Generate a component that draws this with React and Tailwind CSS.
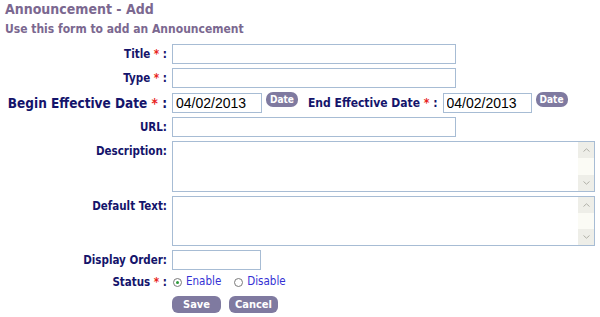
import React from "react";

const font = "font-['DejaVu_Sans_Condensed','DejaVu_Sans',sans-serif]";

function Label({ children, req, big }) {
  return (
    <div
      className={`w-[162px] shrink-0 text-right font-bold text-[#14146b] ${
        big ? "text-[13.5px]" : "text-[11.5px]"
      } leading-[20px] whitespace-nowrap`}
    >
      {children}
      {req && <span className="text-[#e8231d]"> *</span>}
      {req ? " :" : ":"}
    </div>
  );
}

function TextBox({ w, value = "" }) {
  return (
    <input
      type="text"
      defaultValue={value}
      className={`block ${w} h-[20px] border border-[#a7bcd4] bg-white px-[3px] text-[14px] text-black outline-none font-['Liberation_Sans',Arial,sans-serif]`}
    />
  );
}

function SmallBtn({ children }) {
  return (
    <span className="ml-[4px] -mt-[1px] flex h-[15px] items-center rounded-[7px] bg-[#7f7aa0] px-[4px] text-[10px] font-bold leading-none text-white">
      {children}
    </span>
  );
}

function Chevron({ up }) {
  return (
    <svg width="7" height="4" viewBox="0 0 7 4">
      <path
        d={up ? "M0.5 3.5 L3.5 0.8 L6.5 3.5" : "M0.5 0.5 L3.5 3.2 L6.5 0.5"}
        fill="none"
        stroke="#b0b0a8"
        strokeWidth="1"
      />
    </svg>
  );
}

function Area({ h }) {
  return (
    <div className={`ml-[5px] flex w-[426px] ${h} border border-[#a7bcd4] bg-white`}>
      <textarea className="flex-1 resize-none outline-none" />
      <div className="flex w-[16px] flex-col justify-between bg-[#fbfbf5]">
        <div className="flex h-[16px] items-center justify-center bg-[#eeeee8]">
          <Chevron up />
        </div>
        <div className="flex h-[16px] items-center justify-center bg-[#eeeee8]">
          <Chevron />
        </div>
      </div>
    </div>
  );
}

function Radio({ checked, label }) {
  return (
    <span className="flex items-center">
      <span className="flex h-[9px] w-[9px] items-center justify-center rounded-full border border-[#7a7a7a] bg-white">
        {checked && <span className="h-[3px] w-[3px] rounded-full bg-[#2e9a3a]" />}
      </span>
      <span className="ml-[4px] text-[11.5px] text-[#3431d4]">{label}</span>
    </span>
  );
}

export default function App() {
  return (
    <div className={`h-[317px] w-[600px] bg-white ${font} px-[5px] pt-[1px]`}>
      <h1 className="text-[14px] font-bold leading-[17px] text-[#7b6890]">
        Announcement - Add
      </h1>
      <p className="mt-[4px] text-[12px] font-bold leading-[15px] text-[#7b6890]">
        Use this form to add an Announcement
      </p>

      <div className="mt-[7px] flex flex-col">
        {/* Title */}
        <div className="flex items-start">
          <Label req>Title</Label>
          <div className="ml-[5px]">
            <TextBox w="w-[284px]" />
          </div>
        </div>

        {/* Type */}
        <div className="mt-[4px] flex items-start">
          <Label req>Type</Label>
          <div className="ml-[5px]">
            <TextBox w="w-[284px]" />
          </div>
        </div>

        {/* Dates */}
        <div className="mt-[5px] flex items-start">
          <Label req big>
            Begin Effective Date
          </Label>
          <div className="ml-[5px] flex items-start">
            <TextBox w="w-[90px]" value="04/02/2013" />
            <SmallBtn>Date</SmallBtn>
          </div>
          <div className="ml-[10px] text-[12px] font-bold leading-[20px] text-[#14146b] whitespace-nowrap">
            End Effective Date<span className="text-[#e8231d]"> *</span> :
          </div>
          <div className="ml-[5px] flex items-start">
            <TextBox w="w-[89px]" value="04/02/2013" />
            <SmallBtn>Date</SmallBtn>
          </div>
        </div>

        {/* URL */}
        <div className="mt-[4px] flex items-start">
          <Label>URL</Label>
          <div className="ml-[5px]">
            <TextBox w="w-[284px]" />
          </div>
        </div>

        {/* Description */}
        <div className="mt-[4px] flex items-start">
          <Label>Description</Label>
          <Area h="h-[51px]" />
        </div>

        {/* Default Text */}
        <div className="mt-[4px] flex items-start">
          <Label>Default Text</Label>
          <Area h="h-[50px]" />
        </div>

        {/* Display Order */}
        <div className="mt-[4px] flex items-start">
          <Label>Display Order</Label>
          <div className="ml-[5px]">
            <TextBox w="w-[89px]" />
          </div>
        </div>

        {/* Status */}
        <div className="mt-[2px] flex h-[20px] items-center">
          <Label req>Status</Label>
          <div className="ml-[6px] flex items-center gap-[13px]">
            <Radio checked label="Enable" />
            <Radio label="Disable" />
          </div>
        </div>

        {/* Buttons */}
        <div className="-ml-[5px] mt-[4px] flex gap-[8px] pl-[172px]">
          <button className="h-[17px] w-[49px] rounded-[6px] bg-[#7f7aa0] text-[11px] font-bold leading-none text-white">
            Save
          </button>
          <button className="h-[17px] w-[49px] rounded-[6px] bg-[#7f7aa0] text-[11px] font-bold leading-none text-white">
            Cancel
          </button>
        </div>
      </div>
    </div>
  );
}
